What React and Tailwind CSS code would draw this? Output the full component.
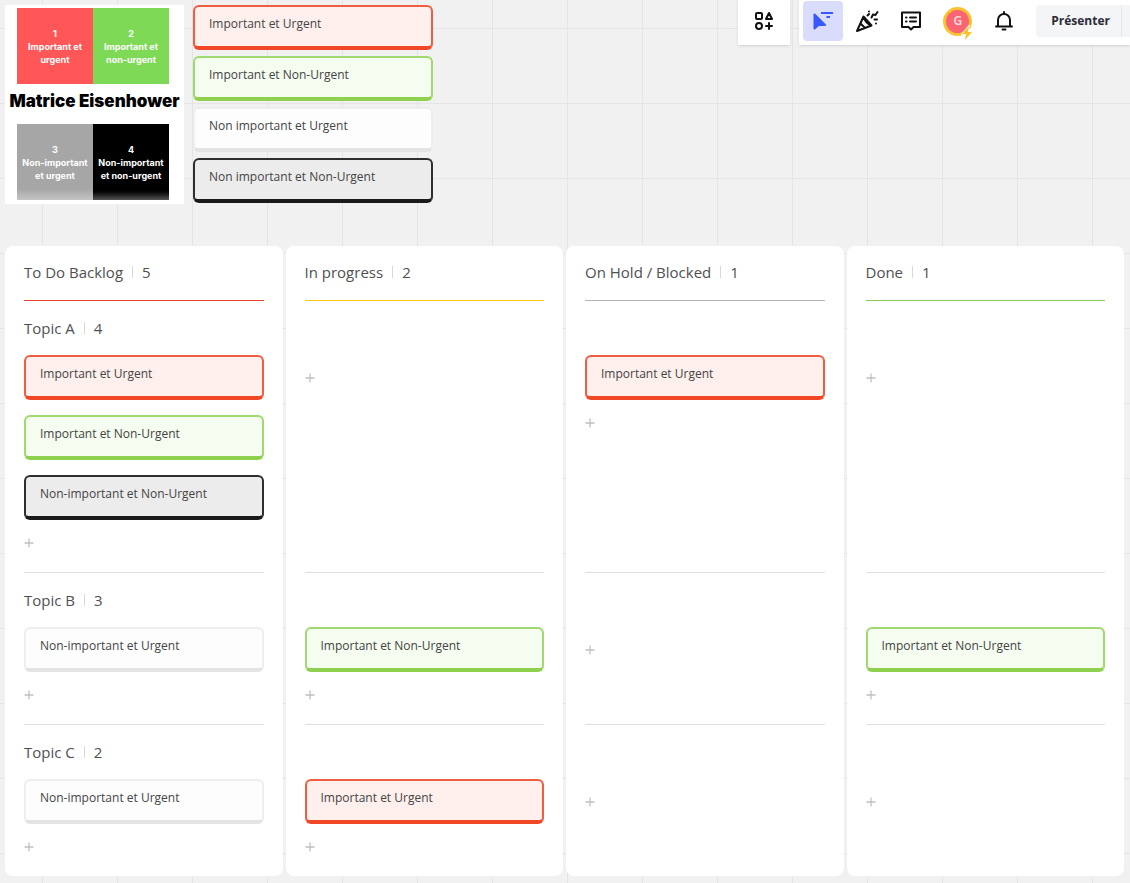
import React from 'react';
import clsx from 'clsx';

const legend = [
    { text: 'Important et Urgent', tone: 'red' },
    { text: 'Important et Non-Urgent', tone: 'green' },
    { text: 'Non important et Urgent', tone: 'plain' },
    { text: 'Non important et Non-Urgent', tone: 'black' },
];

const matrix = [
    { number: 1, text: 'Important et urgent', className: 'bg-[#ff5757]' },
    { number: 2, text: 'Important et non-urgent', className: 'bg-[#7ed957]' },
    { number: 3, text: 'Non-important et urgent', className: 'bg-linear-to-b from-[#a6a6a6] from-85% to-[#c4c4c4]' },
    { number: 4, text: 'Non-important et non-urgent', className: 'bg-linear-to-b from-black from-85% to-[#555555]' },
];

const topics = [
    { name: 'Topic A', count: 4 },
    { name: 'Topic B', count: 3 },
    { name: 'Topic C', count: 2 },
];

// cells: one list of cards per topic
const columns = [
    {
        name: 'To Do Backlog',
        count: 5,
        line: 'border-[#e8412d]',
        cells: [
            [
                { text: 'Important et Urgent', tone: 'red' },
                { text: 'Important et Non-Urgent', tone: 'green' },
                { text: 'Non-important et Non-Urgent', tone: 'black' },
            ],
            [{ text: 'Non-important et Urgent', tone: 'plain' }],
            [{ text: 'Non-important et Urgent', tone: 'plain' }],
        ],
    },
    {
        name: 'In progress',
        count: 2,
        line: 'border-[#fac710]',
        cells: [
            [],
            [{ text: 'Important et Non-Urgent', tone: 'green' }],
            [{ text: 'Important et Urgent', tone: 'red' }],
        ],
    },
    {
        name: 'On Hold / Blocked',
        count: 1,
        line: 'border-[#b4b4b8]',
        cells: [[{ text: 'Important et Urgent', tone: 'red' }], [], []],
    },
    {
        name: 'Done',
        count: 1,
        line: 'border-[#8bcb50]',
        cells: [[], [{ text: 'Important et Non-Urgent', tone: 'green' }], []],
    },
];

const tones = {
    red: 'border-[#ef5e43] border-b-[#f24726] bg-[#ffefed]',
    green: 'border-[#9fd970] border-b-[#8fd14f] bg-[#f5fcf0]',
    plain: 'border-[#eeeeee] border-b-[#e4e4e4] bg-[#fdfdfd]',
    black: 'border-[#2e2e2e] border-b-[#1a1a1a] bg-[#ececec]',
};

function Card({ text, tone }) {
    return (
        <div className={clsx('h-[45px] rounded-md border-2 border-b-4 px-3.5 pt-[7px] text-xs leading-5 text-[#444444]', tones[tone])}>
            {text}
        </div>
    );
}

function Heading({ name, count }) {
    return (
        <h2 className="flex items-center gap-[9px] text-[15px] leading-5 text-[#505050]">
            {name}
            <span className="h-3 w-px bg-[#d8d8d8]" />
            <span>{count}</span>
        </h2>
    );
}

function AddButton({ tall }) {
    return (
        <button type="button" aria-label="Ajouter une carte" className={clsx('flex w-4 items-center', tall ? 'h-[45px]' : 'h-4')}>
            <svg className="size-2.5" viewBox="0 0 10 10" stroke="#c0c0c0" strokeWidth="1.3">
                <path d="M5 .5v9M.5 5h9" />
            </svg>
        </button>
    );
}

function Column({ column, first }) {
    return (
        <section className="row-span-4 grid grid-rows-subgrid rounded-lg bg-white px-[19px]">
            <div className={clsx('flex h-[55px] items-center border-b pb-0.5', column.line)}>
                <Heading name={column.name} count={column.count} />
            </div>
            {column.cells.map((cards, i) => (
                <div key={i} className={clsx('flex flex-col pb-[21px]', i < 2 && 'border-b border-[#dedede]')}>
                    <div className="flex h-[54px] items-center">
                        {first && <Heading name={topics[i].name} count={topics[i].count} />}
                    </div>
                    <div className="flex flex-col gap-[15px]">
                        {cards.map((card) => <Card key={card.text} {...card} />)}
                        <AddButton tall={cards.length === 0} />
                    </div>
                </div>
            ))}
        </section>
    );
}

function MatrixSquare({ square }) {
    return (
        <div className={clsx('flex size-[76px] flex-col items-center justify-center text-center text-[9px] leading-[13px] font-bold text-white', square.className)}>
            <span>{square.number}</span>
            <span className="px-1">{square.text}</span>
        </div>
    );
}

function Matrix() {
    return (
        <div className="flex h-[199px] w-[179px] flex-col bg-white pt-[3px] font-['Inter',sans-serif]">
            <div className="flex pl-3">
                {matrix.slice(0, 2).map((square) => <MatrixSquare key={square.number} square={square} />)}
            </div>
            <h1 className="flex h-10 justify-center pt-[7px] text-[17px] leading-5 font-black whitespace-nowrap text-black">Matrice Eisenhower</h1>
            <div className="flex pl-3">
                {matrix.slice(2).map((square) => <MatrixSquare key={square.number} square={square} />)}
            </div>
        </div>
    );
}

function ToolButton({ label, active, children }) {
    return (
        <button type="button" aria-label={label} className={clsx('flex size-10 items-center justify-center rounded', active && 'bg-[#d9dcfb]')}>
            <svg className="size-6" viewBox="0 0 24 24" fill="none" stroke="#111111" strokeWidth="2" strokeLinejoin="round" strokeLinecap="round">
                {children}
            </svg>
        </button>
    );
}

function Toolbar() {
    return (
        <div className="ml-auto flex h-[45px] gap-[9px]">
            <div className="flex w-[52px] justify-center bg-white pt-px shadow-sm">
                <ToolButton label="Applications">
                    <rect x="4" y="4" width="6" height="6" rx="1" />
                    <path d="M17 4l3 6h-6z" />
                    <circle cx="7" cy="17" r="3" />
                    <path d="M17 14v6M14 17h6" />
                </ToolButton>
            </div>
            <div className="flex gap-1 bg-white pt-px pl-1 shadow-sm">
                <ToolButton label="Sélection" active>
                    <path d="M3.500 5.500v14l4-3.500h6.500z" fill="#3859ff" stroke="#3859ff" />
                    <path d="M10 4h12M15.500 8h3.500" stroke="#3859ff" strokeLinecap="butt" />
                </ToolButton>
                <ToolButton label="Réactions">
                    <path d="M8.500 7.500L2 22l14.500-5.500zM8.500 7.500c1 4 4 7.500 8 9M5.500 14.500l4 4" />
                    <path d="M12.500 6.500l1.500-1.500M14 2.500h.01M16.500 8.500l1.500-3 2.500.5L22.500 3M19.500 10.500h2.500M21 14.500h.01" />
                </ToolButton>
                <ToolButton label="Commentaires">
                    <path d="M3 3.500h18v14.500h-6.500L12 20.500 9.500 18H3z" />
                    <path d="M7 8.500h.5M11 8.500h6M7 12.500h.5M11 12.500h6" />
                </ToolButton>
                <div className="flex h-10 w-[45px] items-center justify-center">
                    <div className="relative flex size-[29px] items-center justify-center rounded-full border-3 border-[#fcc22e] bg-[#fb6573] text-xs font-semibold text-[#ffe1e4]">
                        G
                        <svg className="absolute -right-1 -bottom-2 h-4 w-3" viewBox="0 0 12 16">
                            <path d="M8 1L1 9h4L4 15l7-8H7z" fill="#fcc22e" stroke="#ffffff" strokeWidth="1.500" paintOrder="stroke" />
                        </svg>
                    </div>
                </div>
                <ToolButton label="Notifications">
                    <path d="M4 17.500h16M6 17v-6a6 6 0 0 1 12 0v6" />
                    <path d="M12 3v1.500M10.500 20.500h3" />
                </ToolButton>
                <div className="mt-1 ml-2 flex h-8 rounded-l bg-[#f4f5f7]">
                    <button type="button" className="pr-[11px] pl-[15px] text-xs font-bold text-[#2c2c38]">Présenter</button>
                    <span className="w-[9px] border-l border-[#e6e7ea]" />
                </div>
            </div>
        </div>
    );
}

export default function App() {
    return (
        <div className="min-h-screen bg-[#f1f1f1] bg-[linear-gradient(to_right,#e5e5e5_1px,transparent_1px),linear-gradient(to_bottom,#e5e5e5_1px,transparent_1px)] bg-[size:75px_75px] bg-[position:42px_28px] pb-[7px] font-['Open_Sans',sans-serif]">
            <header className="flex items-start pl-[5px]">
                <div className="flex gap-[9px] pt-[5px]">
                    <Matrix />
                    <div className="flex w-60 flex-col gap-1.5">
                        {legend.map((card) => <Card key={card.text} {...card} />)}
                    </div>
                </div>
                <Toolbar />
            </header>
            <main className="mt-[42px] grid grid-cols-4 gap-x-[3px] pr-1.5 pl-[5px]">
                {columns.map((column, i) => <Column key={column.name} column={column} first={i === 0} />)}
            </main>
        </div>
    );
}
